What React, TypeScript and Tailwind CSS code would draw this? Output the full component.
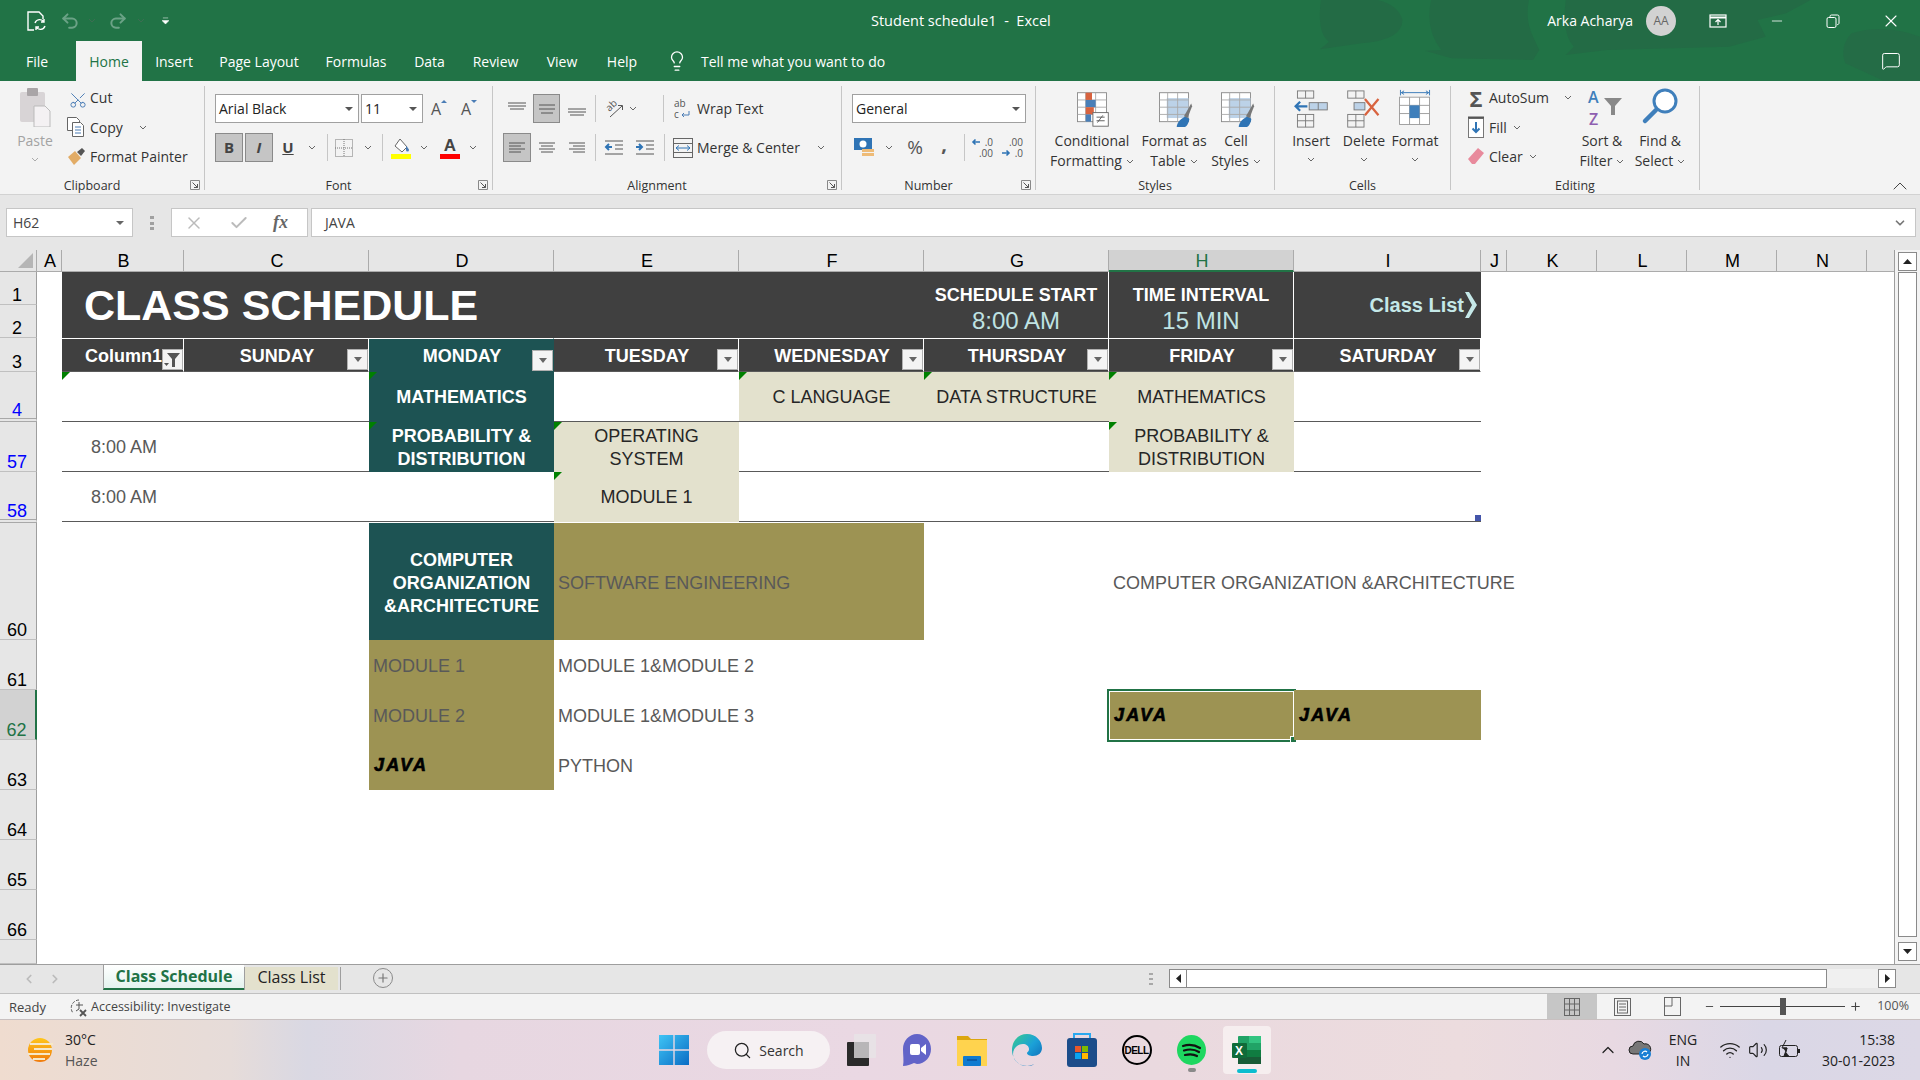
import React from "react";
import { Undo2, Redo2, Scissors, X, Check, Minus, Plus, Lightbulb, MessageSquare, Search, Wifi, Volume2, ChevronUp, ChevronDown, ChevronLeft, ChevronRight } from "lucide-react";

const Chev = ({ className = "" }: { className?: string }) => (
  <svg width="8" height="5" viewBox="0 0 8 5" className={"shrink-0 " + className}><path d="M1 1l3 3 3-3" fill="none" stroke="#666" strokeWidth="1" /></svg>
);
const Sep = ({ className = "" }: { className?: string }) => <div className={"w-px h-[27px] bg-[#c6c6c6] shrink-0 " + className} />;
const GroupSep = () => <div className="w-px h-[104px] mt-[5px] bg-[#c6c6c6] shrink-0" />;
const Launcher = () => (
  <svg width="10" height="10" viewBox="0 0 10 10" className="absolute right-[4px] top-[8px]"><path d="M.5.5h9v9h-9z" fill="none" stroke="#888" /><path d="M2.5 2.5l5 5M7.5 4v3.5H4" fill="none" stroke="#555" /></svg>
);
const Group = ({ w, label, launcher, children }: { w: string; label: string; launcher?: boolean; children: React.ReactNode }) => (
  <div className={"flex flex-col shrink-0 pt-[2px] " + w}>
    <div className="h-[90px] flex">{children}</div>
    <div className={"relative h-[22px] flex items-center justify-center text-[12.5px] text-[#333] pt-[6px] " + (launcher ? "pr-[20px]" : "")}>
      {label}
      {launcher && <Launcher />}
    </div>
  </div>
);
const Lines = ({ ys, xs }: { ys: number[]; xs: [number, number][] }) => (
  <svg width="20" height="20" viewBox="0 0 20 20">{ys.map((y, i) => <path key={i} d={`M${xs[i][0]} ${y}H${xs[i][1]}`} stroke="#555" strokeWidth="1" />)}</svg>
);
const Hi = ({ className = "", children }: { className?: string; children: React.ReactNode }) => (
  <div className={"h-[29px] flex items-center justify-center bg-[#c5c5c5] border border-[#8a8a8a] shrink-0 " + className}>{children}</div>
);
const Slot = ({ w, ml, children }: { w: string; ml: string; children: React.ReactNode }) => (
  <div className={"flex items-center justify-center shrink-0 " + w + " " + ml}>{children}</div>
);
const Combo = ({ w, ml = "", text }: { w: string; ml?: string; text: string }) => (
  <div className={"h-[29px] bg-white border border-[#a0a0a0] flex items-center justify-between pl-[3px] pr-[5px] text-[14px] text-[#222] shrink-0 " + w + " " + ml}>
    <span>{text}</span>
    <svg width="8" height="4" viewBox="0 0 8 4"><path d="M0 0h8L4 4z" fill="#555" /></svg>
  </div>
);

const GridIcon = ({ fill, cf }: { fill?: boolean; cf?: boolean }) => (
  <svg width="38" height="40" viewBox="0 0 42 44" className="mt-[3px]">
    <rect x="5" y="4" width="32" height="32" fill="#fff" stroke="#888" />
    {fill && <rect x="13" y="10" width="24" height="22" fill="#bcd2e8" />}
    {[14, 25].map((x) => <path key={x} d={`M${x} 4v32`} stroke="#aaa" />)}
    {[12, 20, 28].map((y) => <path key={y} d={`M5 ${y}h32`} stroke="#aaa" />)}
    {cf && (
      <>
        <rect x="14" y="4" width="7" height="8" fill="#d8633f" />
        <rect x="14" y="12" width="11" height="8" fill="#4a7fb8" />
        <rect x="14" y="20" width="9" height="8" fill="#d8633f" />
        <rect x="14" y="28" width="6" height="8" fill="#4a7fb8" />
        <rect x="22" y="26" width="17" height="15" fill="#fff" stroke="#666" />
        <path d="M27 37l6-8M26 31h9M26 35h9" stroke="#555" fill="none" />
      </>
    )}
    {fill && (
      <>
        <path d="M24 42c0-6 6-10 10-12l4 3c-1 5-3 9-6 9z" fill="#2f74b5" />
        <path d="M32 30l8-14 1 3-5 13z" fill="#777" />
      </>
    )}
  </svg>
);

const TitleBar = () => (
  <div className="relative h-[41px] flex items-center text-white text-[14px]">
    <svg width="640" height="81" viewBox="0 0 1568 243" preserveAspectRatio="none" className="absolute right-0 top-0 pointer-events-none">
      <path d="M100 0Q90 100 120 125L98 148L200 130Q300 120 300 60Q290 15 240 0Z" fill="#236b45" />
      <path d="M370 0Q355 90 395 150L355 152L420 175L620 180L635 150L620 110Q600 60 610 0Z" fill="#236b45" />
      <path d="M700 0Q690 100 720 140L700 165L800 150L1100 140L1190 110L1170 60L1240 40L1300 0Z" fill="#236b45" />
      <path d="M1400 100Q1370 140 1385 190L1480 243H1568V110Q1480 70 1400 100Z" fill="#246c46" />
    </svg>
    <div className="relative flex items-center w-full">
      <svg width="22" height="22" viewBox="0 0 22 22" className="ml-[25px]" fill="none" stroke="#fff" strokeWidth="1.4">
        <path d="M9 20H3V2h11l4 4v3" />
        <path d="M10 13a5 5 0 0 1 9-1M20 16a5 5 0 0 1-9 1M19 9v3h-3M11 20v-3h3" />
      </svg>
      <Undo2 size={20} strokeWidth={2.4} className="ml-[13px] text-[#6ba286]" />
      <Chev className="ml-[8px] opacity-40" />
      <Redo2 size={20} strokeWidth={2.4} className="ml-[12px] text-[#6ba286]" />
      <Chev className="ml-[9px] opacity-40" />
      <svg width="7" height="8" viewBox="0 0 8 9" className="ml-[17px]"><path d="M1 1h6M0 4h8L4 8z" fill="#fff" stroke="#fff" strokeWidth=".6" /></svg>
      <div className="absolute left-[871px] whitespace-pre text-[14.5px]">Student schedule1  -  Excel</div>
      <div className="ml-auto flex items-center">
        <span className="text-[14px]">Arka Acharya</span>
        <div className="ml-[13px] w-[30px] h-[30px] rounded-full bg-[#d2d2d2] text-[#666] text-[12px] flex items-center justify-center">AA</div>
        <svg width="18" height="14" viewBox="0 0 18 14" className="ml-[33px]" fill="none" stroke="#fff" strokeWidth="1.2"><rect x="1" y="1" width="16" height="12" /><path d="M1 3.5h16" strokeWidth="2" /><path d="M9 11V6M6.5 8L9 5.5 11.500 8" /></svg>
        <Minus size={16} className="ml-[42px]" strokeWidth={1.2} />
        <svg width="14" height="14" viewBox="0 0 14 14" className="ml-[41px]" fill="none" stroke="#fff"><rect x="1" y="3.500" width="9" height="10" rx="1.500" /><path d="M4 3V2.500A1.500 1.500 0 0 1 5.500 1H11.500A1.500 1.500 0 0 1 13 2.500V9A1.500 1.500 0 0 1 11 10.500" /></svg>
        <X size={20} className="ml-[41px] mr-[19px]" strokeWidth={1.3} />
      </div>
    </div>
  </div>
);

const Tab = ({ w, t }: { w: string; t: string }) => <div className={"flex items-center justify-center shrink-0 " + w}>{t}</div>;
const TabsBar = () => (
  <div className="relative h-[40px] flex text-white text-[14px]">
    <Tab w="w-[76px] pr-[2px]" t="File" />
    <div className="w-[66px] bg-[#f3f3f3] text-[#217346] flex items-center justify-center pt-[1px] shrink-0">Home</div>
    <Tab w="w-[64px]" t="Insert" />
    <Tab w="w-[106px]" t="Page Layout" />
    <Tab w="w-[88px]" t="Formulas" />
    <Tab w="w-[59px]" t="Data" />
    <Tab w="w-[73px]" t="Review" />
    <Tab w="w-[60px]" t="View" />
    <Tab w="w-[60px]" t="Help" />
    <Lightbulb size={22} strokeWidth={1.4} className="ml-[14px] self-center shrink-0" />
    <div className="ml-[13px] self-center text-[14px]">Tell me what you want to do</div>
    <MessageSquare size={20} strokeWidth={1.2} className="ml-auto mr-[19px] self-center" />
  </div>
);

const Ribbon = () => (
  <div className="h-[114px] bg-[#f3f3f3] border-b border-[#d2d2d2] flex text-[14px] text-[#333] relative">
    <Group w="w-[204px]" label="Clipboard" launcher>
      <div className="ml-[9px] w-[52px] flex flex-col items-center">
        <div className="h-[48px] flex items-center">
          <svg width="32" height="40" viewBox="0 0 32 40"><rect x="1" y="5" width="25" height="30" rx="2" fill="#d8d4d6" /><rect x="8" y="1" width="11" height="8" rx="1" fill="#a9a5a7" /><path d="M15 19h11l5 5v16H15z" fill="#f4f1f3" stroke="#bbb" /></svg>
        </div>
        <div className="text-[#a3a3a3] leading-[20px]">Paste</div>
        <Chev className="mt-[6px] opacity-50" />
      </div>
      <div className="ml-[5px] flex flex-col">
        <div className="h-[29px] flex items-center">
          <Scissors size={19} strokeWidth={1.2} className="text-[#4a7cb5] -rotate-90 w-[24px] pr-[5px]" />
          <span>Cut</span>
        </div>
        <div className="h-[30px] flex items-center">
          <svg width="24" height="22" viewBox="0 0 24 22" fill="#fff" stroke="#666"><path d="M1.500 1.500h9l3 3v10h-12z" /><path d="M6.500 6.500h8l3 3v11h-11z" /><path d="M9 11h6M9 14h6M9 17h6" stroke="#4a7cb5" /></svg>
          <span>Copy</span>
          <Chev className="ml-[16px]" />
        </div>
        <div className="h-[28px] flex items-center">
          <svg width="24" height="20" viewBox="0 0 24 20"><path d="M2 11l7-6 6 7-7 7z" fill="#e2ac66" /><path d="M11 6l5-4 3 3-4 5z" fill="#555" /></svg>
          <span className="whitespace-nowrap">Format Painter</span>
        </div>
      </div>
    </Group>
    <GroupSep />
    <Group w="w-[287px]" label="Font" launcher>
      <div className="pl-[10px] flex flex-col">
        <div className="mt-[11px] h-[29px] flex items-center">
          <Combo w="w-[144px]" text="Arial Black" />
          <Combo w="w-[62px]" ml="ml-[2px]" text="11" />
          <Slot w="w-[24px]" ml="ml-[4px]">
            <span className="text-[16px] leading-[20px] text-[#555]">A</span>
            <svg width="6" height="16" viewBox="0 0 6 16" className="mb-[6px]"><path d="M0 5l3-3 3 3z" fill="#4a7cb5" /></svg>
          </Slot>
          <Slot w="w-[24px]" ml="ml-[6px]">
            <span className="text-[16px] leading-[20px] text-[#555]">A</span>
            <svg width="6" height="16" viewBox="0 0 6 16" className="mb-[6px]"><path d="M0 2l3 3 3-3z" fill="#4a7cb5" /></svg>
          </Slot>
        </div>
        <div className="mt-[10px] h-[29px] flex items-center">
          <Hi className="w-[28px] font-bold text-[15px] text-[#444]">B</Hi>
          <Hi className="w-[28px] ml-[2px] italic font-bold text-[15px] text-[#444]">I</Hi>
          <Slot w="w-[20px]" ml="ml-[5px]"><span className="underline font-bold text-[#444] text-[15px]">U</span></Slot>
          <Chev className="ml-[10px]" />
          <Sep className="ml-[11px]" />
          <Slot w="w-[18px]" ml="ml-[7px]"><svg width="18" height="18" viewBox="0 0 18 18" fill="none" stroke="#777" strokeDasharray="1 1"><rect x=".5" y=".5" width="17" height="17" /><path d="M9 0v18M0 9h18" /></svg></Slot>
          <Chev className="ml-[11px]" />
          <Sep className="ml-[10px]" />
          <Slot w="w-[20px]" ml="ml-[8px]"><svg width="20" height="22" viewBox="0 0 20 22"><path d="M9 2l7 8-5 5-7-6z" fill="#fff" stroke="#666" /><path d="M15 9c2 2 3 3 3 4a1.500 1.500 0 0 1-3 0z" fill="#4a7cb5" /><rect y="17" width="20" height="5" fill="#ffff00" /></svg></Slot>
          <Chev className="ml-[9px]" />
          <Slot w="w-[20px]" ml="ml-[12px]">
            <div className="flex flex-col items-center w-[20px]">
              <span className="font-['Liberation_Sans'] font-bold text-[17px] leading-[17px] text-[#444]">A</span>
              <div className="w-[20px] h-[5px] bg-[#ff0000]" />
            </div>
          </Slot>
          <Chev className="ml-[9px]" />
        </div>
      </div>
    </Group>
    <GroupSep />
    <Group w="w-[348px]" label="Alignment" launcher>
      <div className="flex flex-col">
        <div className="mt-[11px] h-[29px] flex items-center">
          <Slot w="w-[20px]" ml="ml-[14px]"><Lines ys={[4, 7, 10]} xs={[[1, 19], [1, 19], [3, 17]]} /></Slot>
          <Hi className="w-[27px] ml-[6px]"><Lines ys={[6, 10, 14]} xs={[[2, 18], [2, 18], [4, 16]]} /></Hi>
          <Slot w="w-[20px]" ml="ml-[7px]"><Lines ys={[10, 13, 16]} xs={[[1, 19], [1, 19], [3, 17]]} /></Slot>
          <Sep className="ml-[8px]" />
          <Slot w="w-[20px]" ml="ml-[8px]">
            <div className="relative w-[20px] h-[20px]">
              <span className="absolute left-[1px] top-0 -rotate-45 text-[10px] leading-[12px] text-[#555]">ab</span>
              <svg width="20" height="20" viewBox="0 0 20 20" fill="none" stroke="#555" className="absolute left-0 top-0"><path d="M6 18L18 7M14 6.500h4.500V11" /></svg>
            </div>
          </Slot>
          <Chev className="ml-[5px]" />
          <Sep className="ml-[26px]" />
          <Slot w="w-[20px]" ml="ml-[9px]">
            <svg width="18" height="27" viewBox="0 0 18 27">
              <text x="0" y="12" fontSize="10" fill="#555" fontFamily="Open Sans">ab</text>
              <text x="0" y="23" fontSize="10" fill="#555" fontFamily="Open Sans">c</text>
              <path d="M8 20h7v-4M8 20l2-2M8 20l2 2" fill="none" stroke="#4a7cb5" />
            </svg>
          </Slot>
          <span className="ml-[4px] whitespace-nowrap">Wrap Text</span>
        </div>
        <div className="mt-[10px] h-[29px] flex items-center">
          <Hi className="w-[28px] ml-[10px]"><Lines ys={[5, 8, 11, 14]} xs={[[2, 18], [2, 14], [2, 18], [2, 14]]} /></Hi>
          <Slot w="w-[20px]" ml="ml-[6px]"><Lines ys={[5, 8, 11, 14]} xs={[[2, 18], [4, 16], [2, 18], [4, 16]]} /></Slot>
          <Slot w="w-[20px]" ml="ml-[10px]"><Lines ys={[5, 8, 11, 14]} xs={[[2, 18], [6, 18], [2, 18], [6, 18]]} /></Slot>
          <Sep className="ml-[8px]" />
          <Slot w="w-[20px]" ml="ml-[8px]"><svg width="20" height="20" viewBox="0 0 20 20"><path d="M1 3h18M11 7h8M11 11h8M1 16h18" stroke="#555" /><path d="M8 9H2M5 6L2 9l3 3" stroke="#2f74b5" strokeWidth="2" fill="none" /></svg></Slot>
          <Slot w="w-[20px]" ml="ml-[11px]"><svg width="20" height="20" viewBox="0 0 20 20"><path d="M1 3h18M11 7h8M11 11h8M1 16h18" stroke="#555" /><path d="M1 9h6M4 6l3 3-3 3" stroke="#2f74b5" strokeWidth="2" fill="none" /></svg></Slot>
          <Sep className="ml-[9px]" />
          <Slot w="w-[20px]" ml="ml-[8px]"><svg width="20" height="20" viewBox="0 0 20 20" fill="none"><rect x=".5" y=".5" width="19" height="19" stroke="#666" /><path d="M0 5.500h20M0 14.500h20" stroke="#666" /><path d="M3 10h14M6 7.500L3 10l3 2.500M14 7.500l3 2.500-3 2.500" stroke="#2f74b5" /></svg></Slot>
          <span className="ml-[4px] w-[120px] whitespace-nowrap shrink-0">Merge &amp; Center</span>
          <Chev />
        </div>
      </div>
    </Group>
    <GroupSep />
    <Group w="w-[193px]" label="Number" launcher>
      <div className="flex flex-col">
        <div className="mt-[11px] h-[29px] flex items-center"><Combo w="w-[174px]" ml="ml-[10px]" text="General" /></div>
        <div className="mt-[10px] h-[29px] flex items-center">
          <Slot w="w-[24px]" ml="ml-[11px]"><svg width="24" height="22" viewBox="0 0 24 22"><rect x="1" y="1" width="18" height="12" fill="#2f74b5" /><circle cx="10" cy="7" r="3.500" fill="#fff" /><rect x="9" y="12" width="12" height="3" fill="#eebb77" /><rect x="9" y="16" width="12" height="3" fill="#eebb77" /></svg></Slot>
          <Chev className="ml-[8px]" />
          <Slot w="w-[20px]" ml="ml-[12px]"><span className="text-[19px] text-[#555]">%</span></Slot>
          <Slot w="w-[10px]" ml="ml-[14px]"><span className="text-[20px] font-bold text-[#555] leading-none -mt-[8px]">,</span></Slot>
          <Sep className="ml-[15px]" />
          <Slot w="w-[22px]" ml="ml-[6px]">
            <div className="w-[22px] text-[10px] leading-[11px] text-[#555] text-right">
              <div className="flex items-center justify-between"><svg width="10" height="8" viewBox="0 0 10 8"><path d="M9 4H2M4.500 1.500L2 4l2.500 2.500" stroke="#2f74b5" strokeWidth="1.600" fill="none" /></svg><span>.0</span></div>
              <div>.00</div>
            </div>
          </Slot>
          <Slot w="w-[22px]" ml="ml-[8px]">
            <div className="w-[22px] text-[10px] leading-[11px] text-[#555] text-right">
              <div>.00</div>
              <div className="flex items-center justify-between"><svg width="10" height="8" viewBox="0 0 10 8"><path d="M1 4h7M5.500 1.500L8 4 5.500 6.500" stroke="#2f74b5" strokeWidth="1.600" fill="none" /></svg><span>.0</span></div>
            </div>
          </Slot>
        </div>
      </div>
    </Group>
    <GroupSep />
    <Group w="w-[238px]" label="Styles">
      <div className="ml-[12px] w-[88px] flex flex-col items-center leading-[20px] shrink-0">
        <div className="h-[48px] flex items-center"><GridIcon cf /></div>
        <div>Conditional</div>
        <div className="flex items-center gap-[4px]">Formatting<Chev /></div>
      </div>
      <div className="ml-[2px] w-[72px] flex flex-col items-center leading-[20px] shrink-0">
        <div className="h-[48px] flex items-center"><GridIcon fill /></div>
        <div className="whitespace-nowrap">Format as</div>
        <div className="flex items-center gap-[4px]">Table<Chev /></div>
      </div>
      <div className="ml-[1px] w-[50px] flex flex-col items-center leading-[20px] shrink-0">
        <div className="h-[48px] flex items-center"><GridIcon fill /></div>
        <div>Cell</div>
        <div className="flex items-center gap-[4px]">Styles<Chev /></div>
      </div>
    </Group>
    <GroupSep />
    <Group w="w-[175px]" label="Cells">
      <div className="ml-[11px] w-[50px] flex flex-col items-center leading-[20px] shrink-0">
        <div className="h-[48px] flex items-center">
          <svg width="36" height="38" viewBox="0 0 38 42" fill="none" stroke="#777" className="mt-[4px]"><rect x="4" y="1" width="18" height="8" /><path d="M13 1v8" /><rect x="4" y="27" width="18" height="14" /><path d="M13 27v14M4 34h18" /><rect x="17" y="14" width="20" height="8" fill="#bcd2e8" /><path d="M27 14v8" /><path d="M15 18H2M7 13l-5 5 5 5" stroke="#2f74b5" strokeWidth="2.500" /></svg>
        </div>
        <div>Insert</div>
        <Chev className="mt-[6px]" />
      </div>
      <div className="w-[56px] flex flex-col items-center leading-[20px] shrink-0">
        <div className="h-[48px] flex items-center">
          <svg width="36" height="38" viewBox="0 0 38 42" fill="none" stroke="#777" className="mt-[4px]"><rect x="1" y="1" width="18" height="8" /><path d="M10 1v8" /><rect x="1" y="27" width="18" height="14" /><path d="M10 27v14M1 34h18" /><rect x="8" y="14" width="12" height="8" fill="#bcd2e8" /><path d="M20 10l15 18M35 10L20 28" stroke="#d8633f" strokeWidth="2.500" /></svg>
        </div>
        <div>Delete</div>
        <Chev className="mt-[6px]" />
      </div>
      <div className="w-[46px] flex flex-col items-center leading-[20px] shrink-0">
        <div className="h-[48px] flex items-center">
          <svg width="34" height="40" viewBox="0 0 36 44" fill="none" stroke="#999" className="mt-[4px]"><path d="M2 1v6M34 1v6" stroke="#2f74b5" /><path d="M3 4h30M3 4l3-2M3 4l3 2M33 4l-3-2M33 4l-3 2" stroke="#2f74b5" /><rect x="1" y="9" width="33" height="30" fill="#fff" /><path d="M12 9v30M23 9v30M1 18h33M1 27h33" /><rect x="12" y="18" width="11" height="14" fill="#3f7fbb" stroke="none" /></svg>
        </div>
        <div>Format</div>
        <Chev className="mt-[6px]" />
      </div>
    </Group>
    <GroupSep />
    <Group w="w-[248px]" label="Editing">
      <div className="ml-[12px] w-[110px] flex flex-col shrink-0">
        <div className="h-[29px] flex items-center">
          <span className="w-[26px] text-[22px] text-[#555] font-bold leading-none text-center">Σ</span>
          <span>AutoSum</span>
          <Chev className="ml-[15px]" />
        </div>
        <div className="h-[30px] flex items-center">
          <div className="w-[26px] flex justify-center"><svg width="16" height="22" viewBox="0 0 16 22" fill="none"><rect x=".5" y="2.500" width="15" height="19" stroke="#777" fill="#fff" /><path d="M0 1.500h16" stroke="#555" strokeWidth="2" /><path d="M8 6v10M4.500 12.500L8 16l3.500-3.500" stroke="#2f74b5" strokeWidth="2" /></svg></div>
          <span>Fill</span>
          <Chev className="ml-[6px]" />
        </div>
        <div className="h-[28px] flex items-center">
          <div className="w-[26px] flex justify-center"><svg width="18" height="18" viewBox="0 0 18 18"><path d="M1 12L11 1l6 5-9 11H5z" fill="#e88a9c" /></svg></div>
          <span>Clear</span>
          <Chev className="ml-[6px]" />
        </div>
      </div>
      <div className="w-[58px] flex flex-col items-center leading-[20px] shrink-0">
        <div className="h-[48px] flex items-center">
          <svg width="40" height="46" viewBox="0 0 40 46">
            <text x="6" y="19" fontSize="16" fill="#3f7fbb" fontFamily="Open Sans" fontWeight="600">A</text>
            <text x="7" y="41" fontSize="16" fill="#8e5fb0" fontFamily="Open Sans" fontWeight="600">Z</text>
            <path d="M22 14h18l-7 8v9h-4v-9z" fill="#888" />
          </svg>
        </div>
        <div className="whitespace-nowrap">Sort &amp;</div>
        <div className="flex items-center gap-[4px]">Filter<Chev /></div>
      </div>
      <div className="w-[58px] flex flex-col items-center leading-[20px] shrink-0">
        <div className="h-[48px] flex items-center">
          <svg width="38" height="42" viewBox="0 0 38 42" fill="none"><circle cx="24" cy="15" r="11" stroke="#3f7fbb" strokeWidth="3" fill="#fff" /><path d="M15 24L4 35" stroke="#3f7fbb" strokeWidth="4.500" strokeLinecap="round" /></svg>
        </div>
        <div className="whitespace-nowrap">Find &amp;</div>
        <div className="flex items-center gap-[4px]">Select<Chev /></div>
      </div>
    </Group>
    <GroupSep />
    <ChevronUp size={24} strokeWidth={1} className="absolute right-[8px] top-[93px] text-[#444]" />
  </div>
);

const FormulaBar = () => (
  <div className="h-[55px] bg-[#e6e6e6] pt-[13px] flex items-start text-[14px] text-[#444]">
    <div className="ml-[6px] w-[127px] h-[29px] bg-white border border-[#c6c6c6] flex items-center justify-between pl-[6px] pr-[8px] shrink-0">
      <span>H62</span>
      <svg width="8" height="4" viewBox="0 0 8 4"><path d="M0 0h8L4 4z" fill="#666" /></svg>
    </div>
    <div className="ml-[17px] mt-[8px] w-[4px] h-[14px] flex flex-col justify-between shrink-0">
      <div className="h-[3px] bg-[#a0a0a0]" /><div className="h-[3px] bg-[#a0a0a0]" /><div className="h-[3px] bg-[#a0a0a0]" />
    </div>
    <div className="ml-[17px] w-[137px] h-[29px] bg-white border border-[#c6c6c6] flex items-center shrink-0">
      <X size={20} strokeWidth={1.8} className="ml-[12px] text-[#bbb]" />
      <Check size={20} strokeWidth={2.4} className="ml-[25px] text-[#bbb]" />
      <span className="ml-[24px] italic font-['Liberation_Serif'] text-[18px] text-[#666] font-bold">fx</span>
    </div>
    <div className="ml-[3px] w-[1605px] h-[29px] bg-white border border-[#c6c6c6] flex items-center pl-[13px] pr-[8px] justify-between shrink-0">
      <span>JAVA</span>
      <ChevronDown size={14} strokeWidth={3} className="text-[#777]" />
    </div>
  </div>
);

const ColH = ({ t, sel, cls = "" }: { t: string; sel?: boolean; cls?: string }) => (
  <div className={"border-b border-r border-[#ababab] flex items-center justify-center text-[18px] pt-[2px] pl-[2px] " + (sel ? "bg-[#d2d2d2] text-[#217346] border-b-2 border-b-[#217346] " : "bg-[#e6e6e6] text-black ") + cls}>{t}</div>
);
const RowH = ({ t, blue, sel, dbl, cls = "" }: { t?: string; blue?: boolean; sel?: boolean; dbl?: boolean; cls?: string }) => (
  <div className={"border-r border-r-[#9e9e9e] flex items-end justify-center text-[18px] pr-[2px] " + (dbl ? "border-b-4 border-double border-b-[#a8a8a8] leading-[15px] " : "border-b border-b-[#c0c0c0] leading-[18px] ") + (sel ? "bg-[#d2d2d2] text-[#217346] border-r-2 border-r-[#217346] " : "bg-[#e6e6e6] ") + (blue ? "text-[#0000ff] " : sel ? "" : "text-black ") + cls}>{t}</div>
);
const Tri = () => <div className="absolute left-0 top-0 w-0 h-0 border-t-[8px] border-r-[8px] border-t-[#008000] border-r-transparent" />;
const Filter = ({ active }: { active?: boolean }) => (
  <div className="absolute right-0 bottom-[1px] w-[21px] h-[21px] bg-[#f4f4f4] border border-[#b0b0b0] flex items-center justify-center">
    {active ? (
      <svg width="17" height="17" viewBox="0 0 17 17"><path d="M3 2h13l-5 6v8H8V8z" fill="#555" /><path d="M0 12h5l-2.500 3z" fill="#555" /></svg>
    ) : (
      <svg width="8" height="5" viewBox="0 0 8 5"><path d="M0 0h8L4 5z" fill="#666" /></svg>
    )}
  </div>
);
const DayH = ({ t, teal, active }: { t: string; teal?: boolean; active?: boolean }) => (
  <div className={"relative border-r flex items-center justify-center text-[18px] font-bold text-white border-t border-t-white pl-[2px] pt-[2px] " + (teal ? "bg-[#1d5353] border-r-[#1d5353]" : "bg-[#404040] border-r-white border-b border-b-[#5a5a5a]")}>
    {t}
    <Filter active={active} />
  </div>
);
const Blank = ({ line, cls = "" }: { line?: boolean; cls?: string }) => (
  <div className={(line ? "border-b border-b-[#595959] " : "") + cls} />
);
const Teal = ({ children, tri, cls = "" }: { children: React.ReactNode; tri?: boolean; cls?: string }) => (
  <div className={"relative bg-[#1d5353] text-white font-bold text-[18px] leading-[23px] flex items-center justify-center text-center " + cls}>
    {tri && <Tri />}{children}
  </div>
);
const Cream = ({ children, tri, line, cls = "" }: { children?: React.ReactNode; tri?: boolean; line?: boolean; cls?: string }) => (
  <div className={"relative bg-[#e3e1cd] text-[#262626] text-[18px] leading-[23px] flex items-center justify-center text-center " + (line ? "border-b border-b-[#595959] " : "") + cls}>
    {tri && <Tri />}{children}
  </div>
);
const Olive = ({ children, cls = "" }: { children?: React.ReactNode; cls?: string }) => (
  <div className={"relative bg-[#9d9353] text-[18px] flex items-center whitespace-nowrap text-[#595959] " + cls}>{children}</div>
);
const Plain = ({ children, cls = "" }: { children: React.ReactNode; cls?: string }) => (
  <div className={"text-[18px] text-[#595959] flex items-center pl-[4px] whitespace-nowrap " + cls}>{children}</div>
);
const Java = () => <span className="font-bold italic text-black [-webkit-text-stroke:0.6px_black] tracking-[2.2px]">JAVA</span>;

const Sheet = () => (
  <div className="relative h-[714px] bg-white overflow-hidden font-['Liberation_Sans']">
    <div className="grid grid-cols-[37px_25px_122px_185px_185px_185px_185px_185px_185px_187px_26px_90px_90px_90px_90px_27px] grid-rows-[22px_33px_33px_34px_50px_50px_50px_1px_117px_50px_50px_50px_50px_50px_50px_24px] h-[714px] w-[1894px]">
      <div className="bg-[#e6e6e6] border-b border-r border-[#ababab] relative">
        <div className="absolute right-[3px] bottom-[3px] w-0 h-0 border-b-[15px] border-l-[15px] border-b-[#b5b5b5] border-l-transparent" />
      </div>
      <ColH t="A" /><ColH t="B" /><ColH t="C" /><ColH t="D" /><ColH t="E" /><ColH t="F" /><ColH t="G" /><ColH t="H" sel /><ColH t="I" /><ColH t="J" /><ColH t="K" /><ColH t="L" /><ColH t="M" /><ColH t="N" />
      <div className="bg-[#e6e6e6] border-b border-[#ababab]" />

      <RowH t="1" />
      <div className="row-span-2" />
      <div className="col-span-5 row-span-2 bg-[#404040] text-white font-bold text-[43px] flex items-center pl-[22px]">CLASS SCHEDULE</div>
      <div className="row-span-2 bg-[#404040] border-r border-r-white flex flex-col items-center text-white pt-[13px]">
        <div className="font-bold text-[18px] leading-[21px]">SCHEDULE START</div>
        <div className="text-[24px] text-[#bfe3e3] leading-[30px]">8:00 AM</div>
      </div>
      <div className="row-span-2 bg-[#404040] border-r border-r-white flex flex-col items-center text-white pt-[13px]">
        <div className="font-bold text-[18px] leading-[21px]">TIME INTERVAL</div>
        <div className="text-[24px] text-[#bfe3e3] leading-[30px]">15 MIN</div>
      </div>
      <div className="row-span-2 bg-[#404040] flex items-center justify-end pr-[4px] text-[20px] font-bold text-[#c5e8e8]">
        Class List
        <svg width="12" height="26" viewBox="0 0 12 26" className="ml-[1px]"><path d="M0 0h4l8 13-8 13H0l7-13z" fill="#c5e8e8" /></svg>
      </div>
      <div className="col-span-6 row-span-2" />
      <RowH t="2" />

      <RowH t="3" />
      <div />
      <DayH t="Column1" active />
      <DayH t="SUNDAY" />
      <DayH t="MONDAY" teal />
      <DayH t="TUESDAY" />
      <DayH t="WEDNESDAY" />
      <DayH t="THURSDAY" />
      <DayH t="FRIDAY" />
      <DayH t="SATURDAY" />
      <div className="col-span-6" />

      <RowH t="4" blue dbl />
      <div />
      <div className="relative border-b border-b-[#595959]"><Tri /></div>
      <Blank line />
      <Teal tri>MATHEMATICS</Teal>
      <Blank line />
      <Cream tri line cls="pt-[1px]">C LANGUAGE</Cream>
      <Cream tri line cls="pt-[1px]"><span className="whitespace-nowrap">DATA STRUCTURE</span></Cream>
      <Cream tri>MATHEMATICS</Cream>
      <Blank line />
      <div className="col-span-6" />

      <RowH t="57" blue />
      <div />
      <div className="border-b border-b-[#595959] flex items-center justify-center text-[18px] text-[#595959] pt-[1px] pl-[2px]">8:00 AM</div>
      <Blank line />
      <Teal tri cls="pt-[2px]">PROBABILITY &amp;<br />DISTRIBUTION</Teal>
      <Cream tri cls="pt-[2px]">OPERATING<br />SYSTEM</Cream>
      <Blank line />
      <Blank line />
      <Cream tri cls="pt-[2px]">PROBABILITY &amp;<br />DISTRIBUTION</Cream>
      <Blank line />
      <div className="col-span-6" />

      <RowH t="58" blue dbl cls="row-span-2" />
      <div />
      <div className="border-b border-b-[#595959] flex items-center justify-center text-[18px] text-[#595959] pt-[1px] pl-[2px]">8:00 AM</div>
      <Blank line />
      <Blank line />
      <Cream tri>MODULE 1</Cream>
      <Blank line />
      <Blank line />
      <Blank line />
      <div className="relative border-b border-b-[#595959]">
        <div className="absolute right-0 bottom-0 w-[6px] h-[6px] bg-[#4455aa]" />
      </div>
      <div className="col-span-6" />
      <div className="col-span-15 col-start-2" />

      <RowH t="60" />
      <div className="col-span-2" />
      <div />
      <Teal cls="pt-[4px]">COMPUTER<br />ORGANIZATION<br />&amp;ARCHITECTURE</Teal>
      <Olive cls="col-span-2 pl-[4px] pt-[4px]">SOFTWARE ENGINEERING</Olive>
      <div />
      <Plain cls="pt-[4px]">COMPUTER ORGANIZATION &amp;ARCHITECTURE</Plain>
      <div className="col-span-7" />

      <RowH t="61" />
      <div className="col-span-3" />
      <Olive cls="pl-[4px] pt-[2px]">MODULE 1</Olive>
      <Plain cls="pt-[2px]">MODULE 1&amp;MODULE 2</Plain>
      <div className="col-span-10" />

      <RowH t="62" sel />
      <div className="col-span-3" />
      <Olive cls="pl-[4px] pt-[2px]">MODULE 2</Olive>
      <Plain cls="pt-[2px]">MODULE 1&amp;MODULE 3</Plain>
      <div className="col-span-2" />
      <Olive cls="pl-[5px]">
        <Java />
        <div className="absolute -left-[2px] -top-[1px] -right-[2px] -bottom-[2px] border-2 border-[#217346] pointer-events-none">
          <div className="w-full h-full border border-white" />
        </div>
        <div className="absolute -right-[3px] -bottom-[3px] w-[7px] h-[7px] bg-[#217346] border border-white" />
      </Olive>
      <Olive cls="pl-[5px]"><Java /></Olive>
      <div className="col-span-6" />

      <RowH t="63" />
      <div className="col-span-3" />
      <Olive cls="pl-[5px]"><Java /></Olive>
      <Plain cls="pt-[2px]">PYTHON</Plain>
      <div className="col-span-10" />

      <RowH t="64" /><div className="col-span-15" />
      <RowH t="65" /><div className="col-span-15" />
      <RowH t="66" /><div className="col-span-15" />
      <RowH /><div className="col-span-15" />
    </div>
    <div className="absolute right-0 top-0 w-[26px] h-[714px] bg-[#f3f3f3] border-l border-[#9e9e9e] flex flex-col items-center pt-[2px]">
      <div className="w-[19px] h-[19px] bg-white border border-[#8a8a8a] flex items-center justify-center">
        <svg width="9" height="5" viewBox="0 0 9 5"><path d="M4.500 0L9 5H0z" fill="#222" /></svg>
      </div>
      <div className="w-[19px] h-[665px] bg-white border border-[#8a8a8a] mt-[1px]" />
      <div className="w-[19px] h-[19px] bg-white border border-[#8a8a8a] mt-[5px] flex items-center justify-center">
        <svg width="9" height="5" viewBox="0 0 9 5"><path d="M4.500 5L9 0H0z" fill="#222" /></svg>
      </div>
    </div>
  </div>
);

const SheetTabs = () => (
  <div className="h-[30px] bg-[#e6e6e6] border-t border-b border-t-[#9e9e9e] border-b-[#c0c0c0] flex text-[16px] font-['Open_Sans']">
    <div className="w-[103px] flex items-center pl-[22px] gap-[12px] text-[#bbb] shrink-0">
      <ChevronLeft size={14} strokeWidth={3} /><ChevronRight size={14} strokeWidth={3} />
    </div>
    <div className="w-[141px] h-[25px] bg-gradient-to-b from-white to-[#e4f3ee] border-b-2 border-[#217346] border-l border-l-[#9e9e9e] text-[#217346] font-bold flex items-center justify-center shrink-0 whitespace-nowrap pb-[2px]">Class Schedule</div>
    <div className="w-[94px] h-[23px] bg-[#e3e1cd] border-l border-[#9e9e9e] mt-[2px] text-[#222] flex items-center justify-center shrink-0 whitespace-nowrap pb-[4px]">Class List</div>
    <div className="w-px h-[23px] bg-[#9e9e9e] ml-[2px] mt-[2px]" />
    <div className="ml-[32px] mt-[3px] w-[20px] h-[20px] rounded-full border border-[#8a8a8a] flex items-center justify-center shrink-0"><Plus size={14} className="text-[#777]" /></div>
    <div className="ml-[756px] mt-[8px] w-[4px] h-[12px] flex flex-col justify-between shrink-0">
      <div className="h-[2px] bg-[#a8a8a8]" /><div className="h-[2px] bg-[#a8a8a8]" /><div className="h-[2px] bg-[#a8a8a8]" />
    </div>
    <div className="ml-[16px] mt-[4px] w-[18px] h-[19px] bg-white border border-[#8a8a8a] flex items-center justify-center shrink-0">
      <svg width="5" height="9" viewBox="0 0 5 9"><path d="M0 4.500L5 0v9z" fill="#222" /></svg>
    </div>
    <div className="mt-[4px] w-[640px] h-[19px] bg-white border border-[#8a8a8a] border-l-0 shrink-0" />
    <div className="w-[51px] mt-[4px] h-[19px] bg-[#f0f0f0] shrink-0" />
    <div className="mt-[4px] w-[18px] h-[19px] bg-white border border-[#8a8a8a] flex items-center justify-center shrink-0">
      <svg width="5" height="9" viewBox="0 0 5 9"><path d="M5 4.500L0 0v9z" fill="#222" /></svg>
    </div>
  </div>
);

const StatusBar = () => (
  <div className="h-[26px] bg-[#f3f3f3] flex items-center text-[13px] text-[#444] font-['Open_Sans'] border-b border-[#c8c0c0]">
    <span className="ml-[9px] w-[60px] shrink-0 mt-[2px]">Ready</span>
    <svg width="20" height="20" viewBox="0 0 20 20" fill="none" stroke="#555" className="shrink-0 mt-[2px]"><path d="M10 2a8 8 0 0 0-6 13" strokeDasharray="3 1.500" /><path d="M10 4v7l-3 2M7 7h7" /><path d="M11 12l6 6M17 12l-6 6" strokeWidth="1.800" /></svg>
    <span className="ml-[2px] text-[12.5px] whitespace-nowrap mt-[2px]">Accessibility: Investigate</span>
    <div className="ml-auto h-[25px] flex items-center">
      <div className="w-[50px] h-[25px] bg-[#c6c6c6] flex items-center justify-center">
        <svg width="16" height="18" viewBox="0 0 16 18" fill="none" stroke="#666"><rect x=".5" y=".5" width="15" height="17" /><path d="M5.500 0v18M10.500 0v18M0 6h16M0 12h16" /></svg>
      </div>
      <div className="w-[50px] flex justify-center">
        <svg width="17" height="18" viewBox="0 0 17 18" fill="none" stroke="#666"><rect x=".5" y=".5" width="16" height="17" /><rect x="3.500" y="3" width="10" height="12" /><path d="M5 6h7M5 9h7M5 12h7" /></svg>
      </div>
      <div className="w-[50px] flex justify-center">
        <svg width="17" height="19" viewBox="0 0 17 19" fill="none" stroke="#666"><rect x=".5" y=".5" width="16" height="18" /><path d="M8 0v9H1M16 0" /></svg>
      </div>
      <Minus size={11} className="ml-[7px] text-[#444]" />
      <div className="ml-[5px] w-[125px] h-px bg-[#444] relative">
        <div className="absolute left-[60px] -top-[8px] w-[6px] h-[17px] bg-[#555]" />
      </div>
      <Plus size={13} className="ml-[4px] text-[#444]" />
      <span className="ml-[15px] mr-[11px] text-[12.5px] text-[#555]">100%</span>
    </div>
  </div>
);

const TI = ({ children, cls = "" }: { children: React.ReactNode; cls?: string }) => (
  <div className={"relative w-[55px] h-[48px] flex items-center justify-center shrink-0 " + cls}>{children}</div>
);
const Taskbar = () => (
  <div className="h-[60px] flex items-center bg-[linear-gradient(90deg,#efdccf_0%,#e6dcd9_12%,#d9d8e3_16%,#e7d7e1_24%,#ead8e3_45%,#ead9df_60%,#ecdcde_76%,#e8d9e2_84%,#dad7e6_92%,#dcd8e6_100%)] font-['Open_Sans'] text-[#222]">
    <div className="w-[654px] flex items-center shrink-0">
      <svg width="28" height="28" viewBox="0 0 28 28" className="ml-[26px]">
        <defs><linearGradient id="sun" x1="0" y1="0" x2="0" y2="1"><stop offset="0" stopColor="#ffc61a" /><stop offset="1" stopColor="#f07a0c" /></linearGradient></defs>
        <circle cx="14" cy="14" r="12" fill="url(#sun)" />
        <path d="M4 8h23M8 13h18M2 18h22M7 23h12" stroke="#f6e8c8" strokeWidth="2" />
      </svg>
      <div className="ml-[11px] text-[14px] leading-[21px]">
        <div>30°C</div>
        <div className="text-[#555]">Haze</div>
      </div>
    </div>
    <div className="w-[40px] flex justify-center shrink-0">
      <svg width="30" height="30" viewBox="0 0 30 30">
        <defs><linearGradient id="win" x1="0" y1="0" x2="1" y2="1"><stop offset="0" stopColor="#3fc4f5" /><stop offset="1" stopColor="#0a6cc4" /></linearGradient></defs>
        <path d="M0 0h14.300v14.300H0zM15.700 0H30v14.300H15.700zM0 15.700h14.300V30H0zM15.700 15.700H30V30H15.700z" fill="url(#win)" />
      </svg>
    </div>
    <div className="ml-[13px] w-[123px] h-[38px] rounded-full bg-[#f6f1f3] flex items-center justify-center gap-[7px] text-[14px] text-[#333] shrink-0">
      <Search size={19} strokeWidth={1.6} className="text-[#222]" />Search
    </div>
    <TI cls="ml-[4px]">
      <svg width="30" height="34" viewBox="0 0 30 34"><rect x="0" y="9" width="22" height="24" rx="1" fill="#2a2a2a" /><rect x="7" y="1" width="22" height="24" rx="1" fill="#e8e4e6" opacity=".85" /><rect x="7" y="9" width="15" height="16" fill="#b8b6b8" /></svg>
    </TI>
    <TI>
      <svg width="30" height="34" viewBox="0 0 30 34"><path d="M15 1C7 1 1 8 1 16c0 6 1 12 0 17 4 0 8-2 11-3 1 0 2 1 3 1 8 0 14-7 14-15S23 1 15 1z" fill="#6264c8" /><rect x="8" y="11" width="10" height="11" rx="2" fill="#fff" /><path d="M19 15l5-4v11l-5-4z" fill="#fff" /></svg>
    </TI>
    <TI>
      <svg width="30" height="32" viewBox="0 0 30 32"><path d="M0 2h11l3 3h16v27H0z" fill="#dca60f" /><rect y="6" width="30" height="26" fill="#ffd34e" /><rect x="6" y="22" width="18" height="10" rx="1" fill="#0f7bd0" /><path d="M10 26h10" stroke="#083f80" /></svg>
    </TI>
    <TI>
      <svg width="30" height="32" viewBox="0 0 30 32">
        <defs><linearGradient id="edge" x1="0" y1="0" x2="1" y2="1"><stop offset="0" stopColor="#3acb8c" /><stop offset=".5" stopColor="#1ba1d8" /><stop offset="1" stopColor="#0d5fb0" /></linearGradient></defs>
        <path d="M15 0c9 0 15 7 15 14 0 5-4 8-9 8-3 0-6-1-6-3 0-1 2-1 2-4 0-3-3-5-6-5-6 0-10 5-10 10 0 7 7 12 14 12 3 0 5-1 7-2-3 3-6 2-8 2C7 32 0 25 0 16S6 0 15 0z" fill="url(#edge)" />
      </svg>
    </TI>
    <TI>
      <svg width="30" height="34" viewBox="0 0 30 34"><path d="M7 7V1h16v6" fill="none" stroke="#2aa8ef" strokeWidth="2" /><rect y="5" width="30" height="29" rx="3" fill="#1c4d8a" /><rect x="8" y="13" width="6" height="6" fill="#e8582a" /><rect x="15" y="13" width="6" height="6" fill="#7fba00" /><rect x="8" y="20" width="6" height="6" fill="#0aa4ef" /><rect x="15" y="20" width="6" height="6" fill="#ffb900" /></svg>
    </TI>
    <TI>
      <div className="w-[30px] h-[30px] rounded-full border-2 border-black flex items-center justify-center text-[10px] font-extrabold font-['Liberation_Sans'] tracking-[-0.5px] text-black">DELL</div>
    </TI>
    <TI>
      <svg width="29" height="30" viewBox="0 0 29 30"><ellipse cx="14.500" cy="15" rx="14.500" ry="15" fill="#1ed760" /><path d="M6 11c6-2 12-1 17 2M7 15.500c5-1.500 11-1 15 1.500M8 20c4-1 9-.8 12 1" fill="none" stroke="#111" strokeWidth="2.200" strokeLinecap="round" /></svg>
      <div className="absolute bottom-[2px] w-[8px] h-[4px] rounded-full bg-[#8a8a8a]" />
    </TI>
    <TI>
      <div className="absolute w-[48px] h-[48px] rounded-[4px] bg-[#f6eeef]" />
      <div className="relative w-[30px] h-[30px]">
        <svg width="30" height="30" viewBox="0 0 30 30" className="absolute left-0 top-0">
          <rect x="6" y="1" width="23" height="28" rx="1" fill="#21a366" /><rect x="17" y="1" width="12" height="7" fill="#33c481" /><rect x="6" y="15" width="23" height="7" fill="#107c41" /><rect x="17" y="8" width="12" height="7" fill="#21a366" /><rect x="6" y="22" width="23" height="7" fill="#185c37" />
          <rect x="0" y="8" width="15" height="15" rx="1" fill="#0f6b39" />
        </svg>
        <span className="absolute left-0 top-[8px] w-[15px] h-[15px] flex items-center justify-center text-[12px] font-bold text-white font-['Liberation_Sans'] leading-none">X</span>
      </div>
      <div className="absolute bottom-[1px] w-[20px] h-[4px] rounded-full bg-[#0cbdcf]" />
    </TI>
    <ChevronUp size={20} strokeWidth={1.5} className="ml-auto" />
    <svg width="24" height="22" viewBox="0 0 24 22" className="ml-[10px] shrink-0"><path d="M5 15a4 4 0 0 1 0-8 6 6 0 0 1 11-2 5 5 0 0 1 3 10z" fill="#777" stroke="#222" /><circle cx="17" cy="15" r="6" fill="#1a7fd4" /><path d="M14 15a3 3 0 0 1 5-2M20 15a3 3 0 0 1-5 2" stroke="#fff" fill="none" strokeWidth="1.200" /></svg>
    <div className="ml-[11px] mr-[2px] w-[40px] text-center text-[14px] leading-[21px] shrink-0"><div>ENG</div><div>IN</div></div>
    <Wifi size={22} strokeWidth={1.5} className="ml-[14px] shrink-0" />
    <Volume2 size={20} strokeWidth={1.4} className="ml-[7px] shrink-0" />
    <svg width="24" height="20" viewBox="0 0 24 20" className="ml-[10px] shrink-0" fill="none" stroke="#222"><rect x="1.500" y="5.500" width="18" height="11" rx="2" /><path d="M21 9v4" strokeWidth="2" /><path d="M5 8h4l-3 8h5" fill="#222" /><path d="M8 0L4 8h5l-1 4" /></svg>
    <div className="ml-[13px] mr-[25px] w-[80px] text-right text-[14px] leading-[21px] shrink-0"><div>15:38</div><div className="whitespace-nowrap">30-01-2023</div></div>
  </div>
);

export default function App() {
  return (
    <div className="w-[1920px] h-[1080px] overflow-hidden flex flex-col font-['Open_Sans',sans-serif] bg-white">
      <div className="bg-[#217346] h-[81px]">
        <TitleBar />
        <TabsBar />
      </div>
      <Ribbon />
      <FormulaBar />
      <Sheet />
      <SheetTabs />
      <StatusBar />
      <Taskbar />
    </div>
  );
}
